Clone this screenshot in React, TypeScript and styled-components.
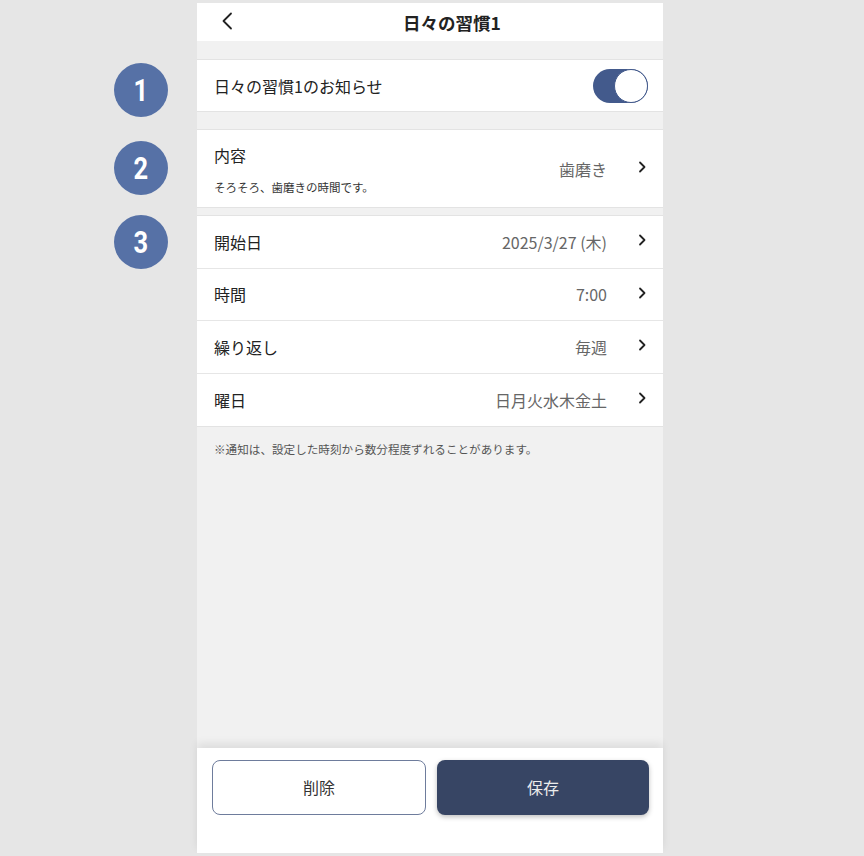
import { type ReactNode } from 'react'
import styled, { createGlobalStyle } from 'styled-components'

const GlobalStyle = createGlobalStyle`
  html, body {
    margin: 0;
    padding: 0;
    background: #e6e6e6;
  }
  body {
    font-family: "Noto Sans CJK JP", "Noto Sans", sans-serif;
    color: #222;
  }
`

interface ListItem {
  label: string
  value: string
}

const SCHEDULE: ListItem[] = [
  { label: '開始日', value: '2025/3/27 (木)' },
  { label: '時間', value: '7:00' },
  { label: '繰り返し', value: '毎週' },
  { label: '曜日', value: '日月火水木金土' },
]

const Chevron = ({ size = 14, weight = 1.8 }: { size?: number; weight?: number }): ReactNode => (
  <svg width={size} height={size} viewBox="0 0 14 14" fill="none">
    <path d="M5 2.5 L9.5 7 L5 11.5" stroke="#222" strokeWidth={weight} strokeLinecap="round" strokeLinejoin="round" />
  </svg>
)

const BackIcon = (): ReactNode => (
  <svg width="18" height="20" viewBox="0 0 18 20" fill="none">
    <path d="M12 2.5 L4.5 10 L12 17.5" stroke="#222" strokeWidth="1.8" strokeLinecap="round" strokeLinejoin="round" />
  </svg>
)

const App = (): ReactNode => {
  return (
    <Page>
      <GlobalStyle />
      <Phone>
        <Header>
          <BackButton aria-label="back">
            <BackIcon />
          </BackButton>
          <Title>日々の習慣1</Title>
        </Header>

        <Content>
          <Section $gap={18}>
            <Marker $top={3}><MarkerNum>1</MarkerNum></Marker>
            <Row $height={51}>
              <Label>日々の習慣1のお知らせ</Label>
              <Toggle $on>
                <Knob />
              </Toggle>
            </Row>
          </Section>

          <Section $gap={17}>
            <Marker $top={11}><MarkerNum>2</MarkerNum></Marker>
            <DetailRow>
              <DetailText>
                <Label>内容</Label>
                <SubText>そろそろ、歯磨きの時間です。</SubText>
              </DetailText>
              <Value>歯磨き</Value>
              <ChevronBox>
                <Chevron />
              </ChevronBox>
            </DetailRow>
          </Section>

          <Section $gap={7}>
            <Marker $top={-1}><MarkerNum>3</MarkerNum></Marker>
            {SCHEDULE.map((item, i) => (
              <Row key={item.label} $height={52.5} $divider={i < SCHEDULE.length - 1}>
                <Label>{item.label}</Label>
                <Value>{item.value}</Value>
                <ChevronBox>
                  <Chevron />
                </ChevronBox>
              </Row>
            ))}
          </Section>

          <Note>※通知は、設定した時刻から数分程度ずれることがあります。</Note>
        </Content>

        <Footer>
          <DeleteButton>削除</DeleteButton>
          <SaveButton>保存</SaveButton>
        </Footer>
      </Phone>
    </Page>
  )
}

export default App

const Page = styled.div`
  height: 856px;
  padding: 3px 0 3px 197px;
  box-sizing: border-box;
  display: flex;
`

const Phone = styled.div`
  width: 466px;
  height: 850px;
  background: #f1f1f1;
  display: flex;
  flex-direction: column;
`

const Header = styled.div`
  height: 38px;
  flex-shrink: 0;
  background: #fff;
  display: flex;
  align-items: center;
  justify-content: center;
  padding-left: 44px;
  position: relative;
`

const BackButton = styled.div`
  position: absolute;
  left: 22px;
  top: 8px;
  display: flex;
`

const Title = styled.h1`
  margin: 0;
  font-size: 17.5px;
  font-weight: 700;
  color: #222;
`

const Content = styled.div`
  flex: 1;
  display: flex;
  flex-direction: column;
`

const Section = styled.div<{ $gap: number }>`
  position: relative;
  margin-top: ${(p) => p.$gap}px;
  background: #fff;
  border-top: 1px solid #e3e3e3;
  border-bottom: 1px solid #e3e3e3;
`

const Marker = styled.div<{ $top: number }>`
  position: absolute;
  left: -83px;
  top: ${(p) => p.$top}px;
  width: 54px;
  height: 54px;
  border-radius: 50%;
  background: #5671a6;
  display: flex;
  align-items: center;
  justify-content: center;
`

const MarkerNum = styled.span`
  color: #fff;
  font-family: "Roboto", "Liberation Sans", sans-serif;
  font-weight: 700;
  font-size: 31px;
  line-height: 1;
  display: inline-block;
  transform: scaleX(0.82);
`

const Row = styled.div<{ $height: number; $divider?: boolean }>`
  box-sizing: border-box;
  height: ${(p) => p.$height}px;
  display: flex;
  align-items: center;
  padding: 0 14px 0 17px;
  border-bottom: ${(p) => (p.$divider ? '1px solid #e6e6e6' : 'none')};
`

const DetailRow = styled.div`
  height: 77px;
  display: flex;
  align-items: center;
  padding: 0 14px 0 17px;
`

const DetailText = styled.div`
  display: flex;
  flex-direction: column;
  gap: 15px;
  padding-top: 2px;
`

const Label = styled.span`
  font-size: 16px;
  color: #222;
  flex: 1;
  line-height: 20px;
`

const SubText = styled.span`
  font-size: 11.5px;
  color: #333;
  line-height: 14px;
`

const Value = styled.span`
  margin-left: auto;
  font-size: 16px;
  color: #666;
  line-height: 20px;
`

const ChevronBox = styled.span`
  display: flex;
  margin-left: 28px;
  margin-top: -3px;
`

const Toggle = styled.div<{ $on?: boolean }>`
  width: 55px;
  height: 34px;
  border-radius: 17px;
  background: ${(p) => (p.$on ? '#435a8c' : '#ccc')};
  display: flex;
  align-items: center;
  justify-content: ${(p) => (p.$on ? 'flex-end' : 'flex-start')};
  box-sizing: border-box;
  margin-right: 1px;
`

const Knob = styled.div`
  width: 34px;
  height: 34px;
  box-sizing: border-box;
  border-radius: 50%;
  background: #fff;
  border: 1.5px solid #435a8c;
`

const Note = styled.p`
  margin: 14px 0 0 17px;
  font-size: 11.6px;
  color: #555;
  line-height: 17px;
`

const Footer = styled.div`
  height: 105px;
  flex-shrink: 0;
  background: #fff;
  box-shadow: 0 -5px 8px rgba(0, 0, 0, 0.08);
  display: flex;
  gap: 11px;
  padding: 12px 14px 0 15px;
  box-sizing: border-box;
  align-items: flex-start;
`

const BaseButton = styled.button`
  flex: 1;
  height: 55px;
  border-radius: 8px;
  font-family: "Noto Sans CJK JP", sans-serif;
  font-size: 16px;
  padding-bottom: 3px;
  cursor: pointer;
`

const DeleteButton = styled(BaseButton)`
  background: #fff;
  border: 1px solid #6e7c9c;
  color: #333;
`

const SaveButton = styled(BaseButton)`
  background: #374564;
  border: none;
  color: #ececec;
  box-shadow: 0 2px 5px rgba(0, 0, 0, 0.25);
`
